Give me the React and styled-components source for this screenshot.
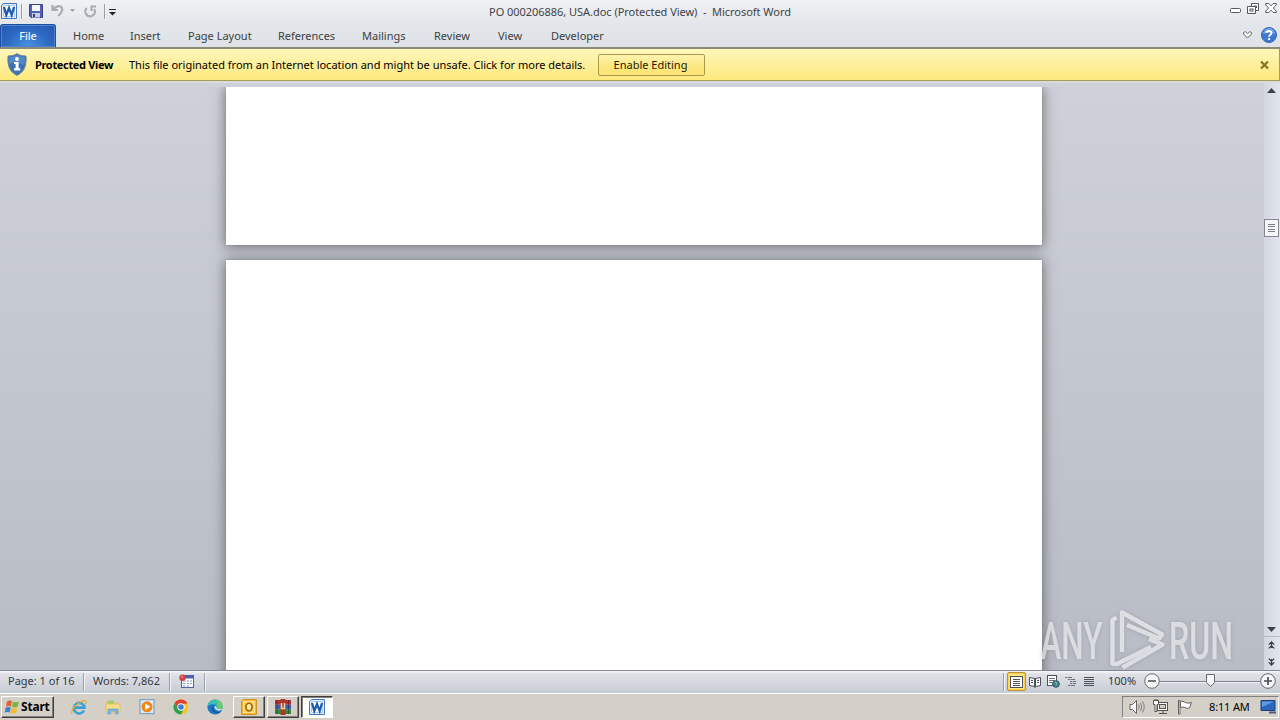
import React from "react";
import styled, { createGlobalStyle, css } from "styled-components";

const GlobalStyle = createGlobalStyle`
  * { box-sizing: border-box; }
  body {
    margin: 0;
    font-family: "Noto Sans", Tahoma, sans-serif;
    font-size: 11px;
    line-height: 14px;
    color: #000;
  }
  svg { display: block; flex: none; }
`;

const Screen = styled.div`
  width: 1280px;
  height: 720px;
  display: flex;
  flex-direction: column;
  overflow: hidden;
  position: relative;
  background: #c9cdd5;
`;

const Header = styled.header`
  flex: none;
  height: 49px;
  background: linear-gradient(#f1f2f4, #e3e6ea 24px, #dfe3e7 46px);
  border-bottom: 2px solid #8b8b79;
`;

const TitleBar = styled.div`
  height: 24px;
  display: grid;
  grid-template-columns: 320px 1fr 320px;
`;

const QuickAccess = styled.div`
  display: flex;
  align-items: flex-start;
  padding: 3px 0 0 1px;
`;

const Title = styled.div`
  white-space: pre;
  text-align: center;
  padding-top: 5px;
  color: #404347;
  letter-spacing: -0.04px;
`;

const WindowButtons = styled.div`
  display: flex;
  justify-content: flex-end;
  gap: 6px;
  padding: 3px 3px 0 0;
`;

const Separator = styled.span`
  flex: none;
  width: 2px;
  height: ${(p) => p.$h || 15}px;
  margin: ${(p) => p.$m || "0"};
  border-left: 1px solid ${(p) => p.$c || "#9a9ea5"};
  border-right: 1px solid #f3f4f6;
`;

const TabRow = styled.nav`
  height: 23px;
  display: flex;
`;

const FileTab = styled.div`
  width: 56px;
  margin-right: 3px;
  padding-top: 4px;
  text-align: center;
  color: #fff;
  border: 1px solid #1d4d9f;
  border-bottom: 0;
  border-radius: 3px 3px 0 0;
  background: radial-gradient(ellipse at 50% 100%, #4b92e4, #2b66c0 60%, #2459ae);
  box-shadow: inset 0 0 0 1px #4f83cf;
`;

const Tab = styled.div`
  width: ${(p) => p.$w}px;
  padding: 5px 0 0 14px;
  color: #3b3e42;
  white-space: nowrap;
`;

const TabTools = styled.div`
  margin-left: auto;
  display: flex;
  align-items: center;
  gap: 9px;
  padding: 0 3px 1px 0;
`;

const MessageBar = styled.div`
  flex: none;
  height: 32px;
  display: flex;
  align-items: center;
  padding: 0 10px 0 7px;
  border: solid #a79c58;
  border-width: 0 1px 1px 0;
  background: linear-gradient(#fff7bb, #fef0a0 45%, #fee97c);
`;

const Strong = styled.strong`
  width: 94px;
  margin-left: 8px;
  letter-spacing: -0.34px;
  white-space: nowrap;
`;

const Message = styled.span`
  width: 469px;
  white-space: nowrap;
`;

const EnableButton = styled.button`
  width: 107px;
  height: 22px;
  padding: 0 2px 0 0;
  font: inherit;
  color: #1e1b05;
  border: 1px solid #a89a4b;
  border-radius: 2px;
  background: linear-gradient(#fff3ae, #fde988 50%, #fde370);
`;

const Body = styled.main`
  flex: 1;
  min-height: 0;
  display: flex;
  border-top: 2px solid #d8dcdd;
  background: linear-gradient(#ced1d9, #b8bcc5);
`;

const Canvas = styled.div`
  flex: 1;
  margin-top: 4px;
  padding-left: 226px;
  display: flex;
  flex-direction: column;
  gap: 15px;
  overflow: hidden;
`;

const Page = styled.div`
  flex: none;
  width: 816px;
  height: ${(p) => p.$h}px;
  background: #fff;
  box-shadow: 0 0 1px #777a80, 0 1px 12px 1px rgba(70, 72, 74, 0.68);
`;

const ScrollBar = styled.div`
  width: 16px;
  padding-right: 1px;
  display: flex;
  flex-direction: column;
  align-items: center;
  background: linear-gradient(90deg, #d3d7e0, #e3e6ed);
`;

const ScrollThumb = styled.div`
  width: 15px;
  height: 18px;
  margin: 126px 0 390px;
  padding: 4px 3px;
  display: flex;
  flex-direction: column;
  justify-content: space-between;
  border: 1px solid #82868f;
  background: #f4f6f9;
  i { height: 1px; background: #777b84; }
`;

const PageJump = styled.div`
  width: 16px;
  height: 34px;
  margin-top: 4px;
  display: flex;
  flex-direction: column;
  align-items: center;
  gap: 9px;
  padding-top: 4px;
  border-top: 1px solid #b4b9c3;
`;

const StatusBar = styled.div`
  flex: none;
  height: 23px;
  display: flex;
  color: #34373c;
  border-top: 1px solid #858992;
  background: linear-gradient(#f8f9fb, #dfe1e7 3px, #d4d7de 12px, #c7cbd3);
`;

const StatusItem = styled.div`
  width: ${(p) => p.$w}px;
  padding: 3px 0 0 ${(p) => p.$pl}px;
  white-space: nowrap;
`;

const ViewButton = styled.div`
  width: 18px;
  height: 19px;
  margin-top: 1px;
  display: grid;
  place-items: center;
  ${(p) => p.$active && css`
    width: 19px;
    border: 1px solid #b7923e;
    border-radius: 2px;
    background: #fde47f;
    box-shadow: inset 0 0 0 1px #fdd04d;
  `}
`;

const TaskBar = styled.footer`
  flex: none;
  height: 27px;
  display: flex;
  border-top: 1px solid #fff;
  background: #d4d0c8;
`;

const raised = css`
  border: 1px solid;
  border-color: #fff #404040 #404040 #fff;
  box-shadow: inset -1px -1px 0 #808080;
`;

const StartButton = styled.div`
  width: 53px;
  height: 22px;
  margin: 2px 17px 0 1px;
  padding-left: 2px;
  display: flex;
  align-items: center;
  gap: 1px;
  font-weight: 700;
  font-size: 12px;
  letter-spacing: -0.2px;
  ${raised}
`;

const Launchers = styled.div`
  width: 162px;
  display: flex;
  gap: 18px;
  padding-top: 5px;
`;

const TaskButton = styled.div`
  width: 32px;
  height: 22px;
  margin: 2px 2px 0 0;
  display: grid;
  place-items: center;
  ${raised}
  ${(p) => p.$pressed && css`
    background: #fff;
    border-color: #404040 #fff #fff #404040;
    box-shadow: inset 1px 1px 0 #808080;
  `}
`;

const Tray = styled.div`
  width: 157px;
  height: 22px;
  margin: 2px 1px 0 auto;
  display: flex;
  align-items: center;
  padding-left: 6px;
  border: 1px solid;
  border-color: #808080 #fff #fff #808080;
`;

const TrayIcon = styled.span`
  padding: 0 8px 0 7px;
`;

const Clock = styled.span`
  width: 51px;
  margin-left: 16px;
  white-space: nowrap;
  letter-spacing: -0.15px;
`;

const Watermark = styled.svg`
  position: absolute;
  left: 1030px;
  top: 600px;
  overflow: visible;
  filter: drop-shadow(0 0 2px rgba(80, 85, 95, 0.4));
`;

const WordIcon = () => (
  <svg width="16" height="16" viewBox="0 0 16 16">
    <path d="M2.500 .5H15.500V15.500H.5V2.500Z" fill="#e4f0fb" stroke="#3f76bd" />
    <path d="M2.500 2.500H13.500V13.500H2.500Z" fill="#f7fbff" stroke="#a9c8e8" />
    <path d="M3 4L5.300 12L8 5L10.700 12L13 4" fill="none" stroke="#1d58aa" strokeWidth="2.200" />
  </svg>
);

const SaveIcon = () => (
  <svg width="14" height="14" viewBox="0 0 14 14">
    <path d="M.5 .5H13.5V13.5H2L.5 12Z" fill="#5360b5" stroke="#3c438e" />
    <rect x="3" y="1" width="8" height="6" fill="#f3f6fd" />
    <rect x="3" y="9" width="8" height="4.5" fill="#c9cfe6" />
    <rect x="4" y="10" width="2" height="3" fill="#343c81" />
  </svg>
);

const UndoIcon = () => (
  <svg width="13" height="13" viewBox="0 0 13 13" fill="none" stroke="#a8abb0" strokeWidth="2.200">
    <path d="M1.500 1V6H7M2 5.500C5 2.500 7 1.500 9.500 2.500C12.500 4 11.500 8.500 7 12" />
  </svg>
);

const RedoIcon = () => (
  <svg width="13" height="13" viewBox="0 0 13 13" fill="none" stroke="#a8abb0" strokeWidth="2.200">
    <path d="M2.800 3A4.800 4.800 0 1 0 10.200 4M12 1.500H7.500V6" />
  </svg>
);

const Arrow = ({ up, w = 8, h = 4, color = "#3d4149" }) => (
  <svg width={w} height={h} viewBox="0 0 8 4" preserveAspectRatio="none">
    <path d={up ? "M0 4L4 0L8 4Z" : "M0 0L4 4L8 0Z"} fill={color} />
  </svg>
);

const QatSlot = styled.span`
  padding: ${(p) => p.$p};
`;

const CustomizeIcon = () => (
  <svg width="7" height="7" viewBox="0 0 7 7">
    <path d="M0 .5H7" stroke="#222" />
    <path d="M0 3H7L3.5 6.5Z" fill="#222" />
  </svg>
);

const MinimizeIcon = () => (
  <svg width="11" height="13" viewBox="0 0 11 13">
    <rect x=".5" y="5.5" width="10" height="4" rx="1" fill="#fff" stroke="#555960" />
  </svg>
);

const RestoreIcon = () => (
  <svg width="12" height="12" viewBox="0 0 12 12" fill="#fff" stroke="#555960">
    <path d="M4.5 .5H11.5V7.5H4.5Z" />
    <path d="M6.5 3H9.5V5" fill="none" />
    <path d="M.5 3.5H8.5V10.5H.5Z" />
    <rect x="3" y="6" width="3" height="2" />
  </svg>
);

const CloseIcon = () => (
  <svg width="12" height="11" viewBox="0 0 12 11">
    <path d="M.7 .5H3.8L6 2.8L8.2 .5H11.3V2L8.3 5L11.3 8V9.5H8.2L6 7.2L3.8 9.5H.7V8L3.7 5L.7 2Z" fill="#fff" stroke="#555960" />
  </svg>
);

const ExpandRibbonIcon = () => (
  <svg width="9" height="8" viewBox="0 0 9 8">
    <path d="M.6 1.5L2.2 .6L4.5 2.6L6.8 .6L8.4 1.5V3L4.5 7L.6 3Z" fill="#fff" stroke="#5b5f66" />
  </svg>
);

const HelpIcon = () => (
  <svg width="16" height="16" viewBox="0 0 16 16">
    <circle cx="8" cy="8" r="7.5" fill="#4079d0" stroke="#3561ac" />
    <path d="M2 7A6 6 0 0 1 14 7Q8 4.500 2 7" fill="#76a5e5" />
    <path d="M5.600 6C5.600 3.300 10.400 3.300 10.400 6C10.400 7.700 8.100 7.600 8.100 9.700M8.100 11V13" fill="none" stroke="#fff" strokeWidth="1.900" />
  </svg>
);

const ShieldIcon = () => (
  <svg width="20" height="23" viewBox="0 0 20 23">
    <path d="M10 .6C12.500 2.400 15.500 3 19 3C19.600 12 18 18.500 10 22.400C2 18.500 .4 12 1 3C4.500 3 7.500 2.400 10 .6Z" fill="#3c72b3" stroke="#6f8794" />
    <path d="M10 2C12.500 3.500 15 4 17.800 4.200C18 8 17.800 10 17 12Q9 8 2.500 11C2 9 2 6 2.200 4.200C5 4 7.500 3.500 10 2Z" fill="#5489c6" />
    <circle cx="10" cy="6" r="1.900" fill="#fff" />
    <path d="M7 9H11.600V15.300H13.200V17.400H7V15.300H8.600V11H7Z" fill="#fff" />
  </svg>
);

const BarClose = styled.svg`
  margin-left: auto;
`;

const DoubleArrow = ({ up }) => (
  <svg width="7" height="8" viewBox="0 0 7 8" fill="none" stroke="#3d4149" strokeWidth="1.300">
    <path d={up ? "M.8 3.600L3.500 1L6.200 3.600M.8 7.400L3.500 4.800L6.200 7.400M3.500 1V7" : "M.8 .6L3.500 3.200L6.200 .6M.8 4.400L3.500 7L6.200 4.400M3.500 1V7"} />
  </svg>
);

const MacroIcon = () => (
  <svg width="16" height="14" viewBox="0 0 16 14">
    <rect x="2.500" y="1.500" width="12" height="12" fill="#fff" stroke="#4c63a8" />
    <path d="M2 3H15" stroke="#4c63a8" strokeWidth="3" />
    <path d="M4 7h2.500M8 7h2M11 7h2M4 9.500h2.500M8 9.500h2M11 9.500h2M4 12h2.500M8 12h2" stroke="#8192c3" />
    <circle cx="3.500" cy="3.700" r="3.200" fill="#cf4443" />
    <circle cx="3" cy="2.700" r="1" fill="#ea9a96" />
  </svg>
);

const PrintLayoutIcon = () => (
  <svg width="13" height="12" viewBox="0 0 13 12" stroke="#4c5057">
    <rect x=".5" y=".5" width="12" height="11" fill="#fff" />
    <path d="M3 3.500H10M3 5.500H10M3 7.500H10M3 9.500H10" />
  </svg>
);

const ReadingIcon = () => (
  <svg width="12" height="12" viewBox="0 0 12 12" fill="#fff" stroke="#4c5057">
    <path d="M.5 1.500L5.500 2.500V10.500L.5 9.500ZM11.500 1.500L6.500 2.500V10.500L11.500 9.500Z" />
    <path d="M2 4.500H4M2 6.500H4M8 4.500H10M8 6.500H10M6 2V12" />
  </svg>
);

const WebIcon = () => (
  <svg width="13" height="13" viewBox="0 0 13 13">
    <rect x=".5" y=".5" width="9" height="10" fill="#fff" stroke="#4c5057" />
    <path d="M2 3.500H8M2 5.500H8M2 7.500H6" stroke="#6a6e75" />
    <circle cx="9" cy="9" r="3.300" fill="#3c7f94" stroke="#2c5570" />
    <path d="M7 8L9 7L10 9L8.500 11" fill="none" stroke="#8cc095" />
  </svg>
);

const OutlineIcon = () => (
  <svg width="12" height="11" viewBox="0 0 12 11" stroke="#6c7078">
    <path d="M0 1.500H7M3 3.500H10M5 5.500H11M5 7.500H11M3 9.500H10" strokeDasharray="2 .6 5 .3" />
  </svg>
);

const DraftIcon = () => (
  <svg width="10" height="11" viewBox="0 0 10 11" stroke="#4c5057">
    <path d="M0 1.500H10M0 3.500H10M0 5.500H10M0 7.500H10M0 9.500H10" />
  </svg>
);

const ZoomSlider = () => (
  <svg width="136" height="21" viewBox="0 0 136 21">
    <path d="M15 10.500H117" stroke="#7e828b" />
    <path d="M15 11.500H117" stroke="#eef0f3" />
    <g fill="#f5f6f8" stroke="#656971">
      <circle cx="8" cy="10" r="7.300" />
      <circle cx="124" cy="10" r="7.300" />
      <path d="M62.500 3.500H70.500V11.500L66.500 15.500L62.500 11.500Z" />
    </g>
    <path d="M4 10H12M120 10H128M124 6V14" stroke="#4a4e56" strokeWidth="1.700" />
  </svg>
);

const WindowsFlag = () => (
  <svg width="16" height="16" viewBox="0 0 16 16">
    <path d="M3 2.500Q5.500 .8 8 2L7 7.500Q4.500 6.300 2 7.800Z" fill="#e8622b" />
    <path d="M9 2.500Q11.500 4 15 2.500L13.500 8Q11 9 8 7.700Z" fill="#7db442" />
    <path d="M1.700 8.700Q4.300 7.300 6.800 8.500L5.700 13.500Q3 12.500 .6 13.700Z" fill="#3d82cd" />
    <path d="M7.700 8.700Q10.500 10 13.300 9L12 14Q9 15.300 6.600 13.900Z" fill="#f5bd2d" />
  </svg>
);

const IeIcon = () => (
  <svg width="16" height="16" viewBox="0 0 16 16" fill="none">
    <path d="M13 11.500A5.300 5.300 0 1 1 13.500 8.600H4" stroke="#38a0da" strokeWidth="2.600" />
    <path d="M1 14.500C-.5 11 6 3.500 12 1.800C15 1 15.800 2.500 14.600 5" stroke="#e2ad35" strokeWidth="1.300" />
  </svg>
);

const FolderIcon = () => (
  <svg width="16" height="16" viewBox="0 0 16 16">
    <path d="M1 2H6L7 3.500H13V6H1Z" fill="#e9c763" />
    <path d="M3 1.500H9V5H3Z" fill="#9fcb7c" />
    <rect x="1" y="5" width="14" height="8" fill="#f7dd88" stroke="#dfb853" strokeWidth=".7" />
    <path d="M3 15V10H13V15H10.500V12H5.500V15Z" fill="#7fbbe4" stroke="#5996c4" strokeWidth=".6" />
  </svg>
);

const MediaIcon = () => (
  <svg width="16" height="16" viewBox="0 0 16 16">
    <rect x="1" y=".7" width="14" height="14" fill="#d9eaf7" stroke="#7295b3" />
    <circle cx="8" cy="7.800" r="5.500" fill="#ee8619" />
    <path d="M6.200 4.600L11.500 7.800L6.200 11Z" fill="#fff" />
  </svg>
);

const ChromeIcon = () => (
  <svg width="16" height="16" viewBox="0 0 16 16">
    <circle cx="8" cy="8" r="7.500" fill="#f9c52c" />
    <path d="M1.500 4.250A7.500 7.500 0 0 1 14.500 4.250L8 5.500L5 10Z" fill="#df4032" />
    <path d="M1.500 4.250A7.500 7.500 0 0 0 8 15.500L11 9.500L5 9.500Z" fill="#2c9f4d" />
    <circle cx="8" cy="8" r="3.700" fill="#fff" />
    <circle cx="8" cy="8" r="2.800" fill="#3d7de0" />
  </svg>
);

const EdgeIcon = () => (
  <svg width="16" height="16" viewBox="0 0 16 16">
    <circle cx="8" cy="8" r="7.600" fill="#1b7ac8" />
    <path d="M.5 7.500C1 -1.500 15 -1.500 15.600 7.500C15.500 10.500 12 11.200 9.800 10C11 7 8.500 5 6 5.200C3 5.300 1 6.500 .5 7.500Z" fill="#3cbfb3" />
    <path d="M8 .4C12 .5 15.500 3.500 15.600 7.500C15.500 10.500 12 11.200 9.800 10C12 6 11 2 8 .4Z" fill="#64cf69" />
    <path d="M7 7C5 9.500 7 13.500 12 13C13 12.900 14 12.300 14.500 12C11 17 4 13 5 9C5.300 7.800 6 7.200 7 7Z" fill="#174f98" />
    <path d="M9.800 10C10.500 8.500 9.500 7 8 7C6.500 8 8 11.500 12.500 11.800L16 10Z" fill="#d9e2e3" />
  </svg>
);

const OutlookIcon = () => (
  <svg width="16" height="16" viewBox="0 0 16 16">
    <path d="M2.500 .5H15.500V15.500H.5V2.500Z" fill="#f6b72f" stroke="#d0941c" />
    <path d="M2.500 2.500H13.500V13.500H2.500Z" fill="#fbd263" stroke="#fbe19a" />
    <ellipse cx="8" cy="8" rx="3.100" ry="3.900" fill="#fdeaae" stroke="#a86e0c" strokeWidth="1.900" />
  </svg>
);

const RarIcon = () => (
  <svg width="16" height="16" viewBox="0 0 16 16">
    <rect y="1" width="16" height="4.700" fill="#b52e38" />
    <rect y="5.700" width="16" height="4.600" fill="#3d5fae" />
    <rect y="10.300" width="16" height="4.700" fill="#35883e" />
    <rect x="5.500" width="5" height="16" fill="#a53b28" />
    <path d="M6.500 4V9.500H9.500V4" fill="none" stroke="#f1dda1" strokeWidth="1.500" />
    <path d="M2 1V15M13.500 1V15" stroke="#291d2e" strokeOpacity=".45" />
  </svg>
);

const SpeakerIcon = () => (
  <svg width="17" height="16" viewBox="0 0 17 16" fill="none" stroke="#64625e">
    <path d="M1 5.500H3.500L7.500 1.500V14.500L3.500 10.500H1Z" fill="#fff" />
    <path d="M9.500 5.500Q11 8 9.500 10.500M11.500 4Q14 8 11.500 12M13.500 2.500Q17 8 13.500 13.500" stroke="#85827c" />
  </svg>
);

const NetworkIcon = () => (
  <svg width="16" height="16" viewBox="0 0 16 16" fill="#fff" stroke="#55534f">
    <rect x="4.500" y="3.500" width="10" height="8" />
    <rect x="6.500" y="5.500" width="6" height="4" fill="#d4d0c8" />
    <path d="M6 14.500H14M10 12V14" />
    <path d="M.5 1.500H5.500V5.500H4V12.500H2V5.500H.5ZM2 0V2M4 0V2" />
  </svg>
);

const FlagIcon = () => (
  <svg width="16" height="16" viewBox="0 0 16 16" fill="#fff" stroke="#65635f">
    <path d="M1.500 15V1.500H3V15Z" />
    <path d="M3.500 2.500Q6 1.500 8.500 3.500Q11 5 14.500 3.500L12.500 9Q10 10 8 8.500Q6 7.500 3.500 8.500Z" />
  </svg>
);

const DesktopIcon = () => (
  <svg width="16" height="16" viewBox="0 0 16 16">
    <path d="M1 1.500H15V11.500H1Z" fill="#2b66bd" stroke="#1d3f7b" />
    <path d="M2 2.500H14L2 8Z" fill="#5d9be2" />
    <path d="M9 13.500H16" stroke="#4b5d7b" strokeWidth="2" />
  </svg>
);

const tabs = [
  ["Home", 57],
  ["Insert", 58],
  ["Page Layout", 90],
  ["References", 84],
  ["Mailings", 72],
  ["Review", 64],
  ["View", 53],
  ["Developer", 80],
];

const AnyRun = () => (
  <Watermark width="220" height="84" viewBox="0 0 220 84">
    <g fill="#fff" fillOpacity=".58" fontFamily="Roboto, sans-serif" fontSize="51" fontWeight="500">
      <text x="10.500" y="59" textLength="62" lengthAdjust="spacingAndGlyphs">ANY</text>
      <text x="139" y="59" textLength="64" lengthAdjust="spacingAndGlyphs">RUN</text>
    </g>
    <path
      d="M86.500 17.500L82.500 20V63.500L87 64L121 47M92 52V12.500L132 34.500L129 38.500L97 25M119 39L132.500 44.500L92.500 67.500"
      fill="none"
      stroke="#fff"
      strokeOpacity=".62"
      strokeWidth="4.400"
      strokeLinejoin="round"
    />
  </Watermark>
);

export default function App() {
  return (
    <>
      <GlobalStyle />
      <Screen>
        <Header>
          <TitleBar>
            <QuickAccess>
              <WordIcon />
              <Separator $m="1px 6px 0 4px" />
              <QatSlot $p="1px 8px 0 0"><SaveIcon /></QatSlot>
              <QatSlot $p="1px 6px 0 0"><UndoIcon /></QatSlot>
              <QatSlot $p="6px 9px 0 0"><Arrow w={5} h={3} color="#a0a3a9" /></QatSlot>
              <QatSlot $p="2px 6px 0 0"><RedoIcon /></QatSlot>
              <Separator $m="1px 3px 0 1px" />
              <QatSlot $p="6px 0 0 0"><CustomizeIcon /></QatSlot>
            </QuickAccess>
            <Title>PO 000206886, USA.doc (Protected View)  -  Microsoft Word</Title>
            <WindowButtons>
              <MinimizeIcon />
              <RestoreIcon />
              <CloseIcon />
            </WindowButtons>
          </TitleBar>
          <TabRow>
            <FileTab>File</FileTab>
            {tabs.map(([name, w]) => (
              <Tab key={name} $w={w}>{name}</Tab>
            ))}
            <TabTools>
              <ExpandRibbonIcon />
              <HelpIcon />
            </TabTools>
          </TabRow>
        </Header>

        <MessageBar>
          <ShieldIcon />
          <Strong>Protected View</Strong>
          <Message>This file originated from an Internet location and might be unsafe. Click for more details.</Message>
          <EnableButton>Enable Editing</EnableButton>
          <BarClose width="9" height="8" viewBox="0 0 9 8">
            <path d="M1 .5L8 7.500M8 .5L1 7.500" stroke="#85742a" strokeWidth="2.200" />
          </BarClose>
        </MessageBar>

        <Body>
          <Canvas>
            <Page $h={158} />
            <Page $h={1056} />
          </Canvas>
          <ScrollBar>
            <QatSlot $p="5px 0 0 0"><Arrow up w={9} h={5} /></QatSlot>
            <ScrollThumb><i /><i /><i /><i /></ScrollThumb>
            <Arrow w={9} h={5} />
            <PageJump>
              <DoubleArrow up />
              <DoubleArrow />
            </PageJump>
          </ScrollBar>
        </Body>

        <StatusBar>
          <StatusItem $w={83} $pl={8}>Page: 1 of 16</StatusItem>
          <Separator $h={18} $m="2px 0 0" />
          <StatusItem $w={84} $pl={8}>Words: 7,862</StatusItem>
          <Separator $h={18} $m="2px 0 0" />
          <StatusItem $w={33} $pl={8}><MacroIcon /></StatusItem>
          <Separator $h={18} $m="2px 0 0" />
          <Separator $h={18} $m="2px 2px 0 auto" />
          <ViewButton $active><PrintLayoutIcon /></ViewButton>
          <ViewButton><ReadingIcon /></ViewButton>
          <ViewButton><WebIcon /></ViewButton>
          <ViewButton><OutlineIcon /></ViewButton>
          <ViewButton><DraftIcon /></ViewButton>
          <StatusItem $w={46} $pl={10}>100%</StatusItem>
          <ZoomSlider />
        </StatusBar>

        <TaskBar>
          <StartButton><WindowsFlag />Start</StartButton>
          <Launchers>
            <IeIcon />
            <FolderIcon />
            <MediaIcon />
            <ChromeIcon />
            <EdgeIcon />
          </Launchers>
          <TaskButton><OutlookIcon /></TaskButton>
          <TaskButton><RarIcon /></TaskButton>
          <TaskButton $pressed><WordIcon /></TaskButton>
          <Tray>
            <SpeakerIcon />
            <TrayIcon><NetworkIcon /></TrayIcon>
            <FlagIcon />
            <Clock>8:11 AM</Clock>
            <DesktopIcon />
          </Tray>
        </TaskBar>

        <AnyRun />
      </Screen>
    </>
  );
}
